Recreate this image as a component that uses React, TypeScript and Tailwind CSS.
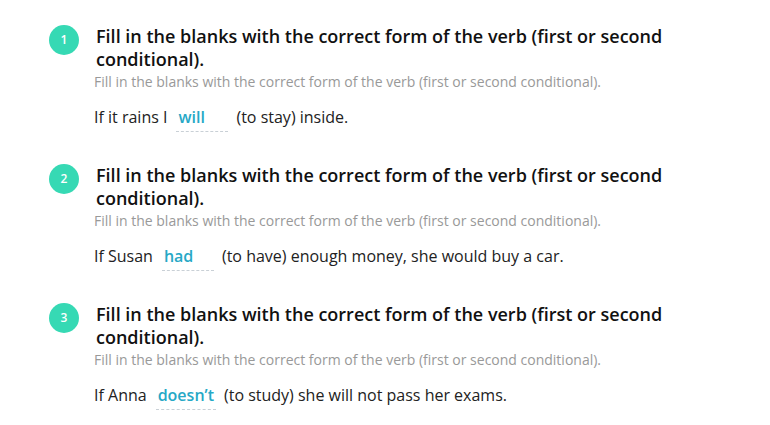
import React from "react";

type Part = { before: string; answer: string; after: string };

const items: Part[] = [
  { before: "If it rains I", answer: "will", after: "(to stay) inside." },
  { before: "If Susan", answer: "had", after: "(to have) enough money, she would buy a car." },
  { before: "If Anna", answer: "doesn’t", after: "(to study) she will not pass her exams." },
];

const title = "Fill in the blanks with the correct form of the verb (first or second conditional).";

export default function App() {
  return (
    <div className="w-[770px] h-[425px] bg-white pt-[25px] pl-[49px] font-['Open_Sans',sans-serif]">
      <div className="flex flex-col gap-[32px]">
        {items.map((it, i) => (
          <div key={i} className="flex">
            <div className="w-[30px] h-[30px] rounded-full bg-[#36d9b4] flex items-center justify-center text-white text-[12px] font-semibold shrink-0">
              {i + 1}
            </div>
            <div className="ml-[17px] w-[580px]">
              <div className="text-[18px] leading-[23px] font-semibold text-[#111]">{title}</div>
              <div className="-ml-[2px] text-[14px] leading-[18px] mt-[2px] text-[#999]">{title}</div>
              <div className="mt-[14px] -ml-[2px] flex items-baseline text-[16px] leading-[24px] text-[#222]">
                <span>{it.before}</span>
                <span className="ml-[9px] mr-[8px] min-w-[52px] border-b border-dashed border-[#c9d0d6] pl-[2px] pr-[2px] pb-[2px] font-semibold text-[#26a8c6]">
                  {it.answer}
                </span>
                <span>{it.after}</span>
              </div>
            </div>
          </div>
        ))}
      </div>
    </div>
  );
}
